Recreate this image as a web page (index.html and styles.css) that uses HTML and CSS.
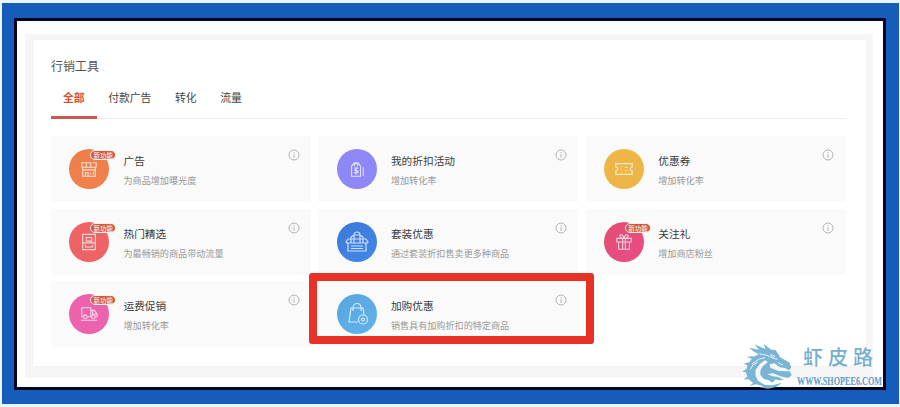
FILE: index.html
```html
<!DOCTYPE html>
<html lang="zh-CN">
<head>
<meta charset="utf-8">
<title>行销工具</title>
<link rel="stylesheet" href="styles.css">
</head>
<body>
<div class="frame">
<div class="screen">
<div class="backdrop">
<main class="panel">
  <h1>行销工具</h1>
  <nav class="tabs"><a class="tab active">全部</a><a class="tab">付款广告</a><a class="tab">转化</a><a class="tab">流量</a></nav>
  <section class="grid">
    <article class="card">
      <div class="icon orange"><svg viewBox="0 0 20 20"><path d="M2 8V3h5v5M7 3h5v5M2 8h16M14 3h4v5M3 8v10h14V8M3 11h14M6 18v-4h3v4M12 14v2M15 13v3"/></svg><span class="badge">新功能</span></div>
      <div class="copy"><h2>广告</h2><p>为商品增加曝光度</p></div><svg class="info" viewBox="0 0 12 12"><circle cx="6" cy="6" r="5"/><path d="M6 5.2v3.6M6 3v1"/></svg>
    </article>
    <article class="card">
      <div class="icon violet"><svg viewBox="0 0 20 20"><path d="M4 18V7l3-4h4l3 4v11zM7 7V4h4v3M9 8v8M11 9H8v3h3v2H7M17 8v10"/></svg></div>
      <div class="copy"><h2>我的折扣活动</h2><p>增加转化率</p></div><svg class="info" viewBox="0 0 12 12"><circle cx="6" cy="6" r="5"/><path d="M6 5.2v3.6M6 3v1"/></svg>
    </article>
    <article class="card">
      <div class="icon yellow"><svg viewBox="0 0 20 20"><path d="M1 4h18v4a2 2 0 0 0 0 4v4H1v-4a2 2 0 0 0 0-4zM7 7v1M7 10v1M7 13v1M11 8h3M11 12h3"/></svg></div>
      <div class="copy"><h2>优惠券</h2><p>增加转化率</p></div><svg class="info" viewBox="0 0 12 12"><circle cx="6" cy="6" r="5"/><path d="M6 5.2v3.6M6 3v1"/></svg>
    </article>
    <article class="card">
      <div class="icon red"><svg viewBox="0 0 20 20"><path d="M3 1.500h14v17H3zM7 5h6v4H7zM3 11h14M6 13v2.500h8V13"/></svg><span class="badge">新功能</span></div>
      <div class="copy"><h2>热门精选</h2><p>为最畅销的商品带动流量</p></div><svg class="info" viewBox="0 0 12 12"><circle cx="6" cy="6" r="5"/><path d="M6 5.2v3.6M6 3v1"/></svg>
    </article>
    <article class="card">
      <div class="icon blue"><svg class="large" viewBox="0 0 24 24"><path d="M6 13V7l3-2h6l3 2v6M9 5c0-4 6-4 6 0M9 5v8M15 5v8M6 9h12M6 9H3l-2 3 2 2M18 9h3l2 3-2 2M3 13h18v8H3zM6 16h12M6 18.500h12"/></svg></div>
      <div class="copy"><h2>套装优惠</h2><p>通过套装折扣售卖更多种商品</p></div><svg class="info" viewBox="0 0 12 12"><circle cx="6" cy="6" r="5"/><path d="M6 5.2v3.6M6 3v1"/></svg>
    </article>
    <article class="card">
      <div class="icon rose"><svg viewBox="0 0 20 20"><path d="M2 6h16v4H2zM4 10v8h12v-8M8.500 6v12M11.500 6v12M10 6C5 6 4 2 7 2c2 0 3 4 3 4s1-4 3-4c3 0 2 4-3 4"/></svg><span class="badge">新功能</span></div>
      <div class="copy"><h2>关注礼</h2><p>增加商店粉丝</p></div><svg class="info" viewBox="0 0 12 12"><circle cx="6" cy="6" r="5"/><path d="M6 5.2v3.6M6 3v1"/></svg>
    </article>
    <article class="card">
      <div class="icon pink"><svg viewBox="0 0 20 20"><path d="M4 13H2V3h10v10H8M12 6h4l3 4v3h-2M14 6v4h5M1 17h18"/><circle cx="6" cy="13" r="2"/><circle cx="15" cy="13" r="2"/></svg><span class="badge">新功能</span></div>
      <div class="copy"><h2>运费促销</h2><p>增加转化率</p></div><svg class="info" viewBox="0 0 12 12"><circle cx="6" cy="6" r="5"/><path d="M6 5.2v3.6M6 3v1"/></svg>
    </article>
    <article class="card">
      <div class="icon sky"><svg class="large" viewBox="0 0 24 24"><path d="M13 20H4L6 6h12l1 7M8 6c0-6 8-6 8 0M8 6v3M16 6v3"/><circle cx="18" cy="17.500" r="4.500"/><circle cx="18" cy="17.500" r="1.500"/></svg></div>
      <div class="copy"><h2>加购优惠</h2><p>销售具有加购折扣的特定商品</p></div><svg class="info" viewBox="0 0 12 12"><circle cx="6" cy="6" r="5"/><path d="M6 5.2v3.6M6 3v1"/></svg>
      <span class="highlight"></span>
    </article>
  </section>
</main>
</div>
</div>
</div>
<div class="watermark">
  <svg class="dragon" viewBox="36 24 150 138">
    <path d="M72 50 57 38 87 44 74 28 106 42 101 27 124 44 137 45 151 67 179 83 184 98 176 106 167 100 148 96 133 85 119 88 121 98 146 108 179 109 185 121 175 129 151 124 130 115 112 117 128 124 145 126 161 134 147 136 137 133 127 143 115 135 101 132 91 119 91 107 98 94 113 81 105 76 89 88 77 104 76 121 84 137 105 150 128 151 157 143 138 156 114 161 89 157 101 154 78 148 58 153 69 144 55 132 41 134 52 124 47 112 37 110 50 101 52 91 41 86 59 81 65 71 49 65 75 64 86 58z"/>
    <path class="cut" d="M88 56 111 61 130 70 143 73M66 87 88 72 105 68M61 103 69 90 83 82M122 59l13 4-5 5zM145 83l14 7"/>
  </svg>
  <div class="brand"><strong>虾皮路</strong><svg class="url" viewBox="0 0 87 14"><text x="0" y="11.500" textLength="85" lengthAdjust="spacingAndGlyphs">WWW.SHOPEE6.COM</text></svg></div>
</div>
</body>
</html>
```
FILE: styles.css
```css
* { box-sizing: border-box; }
body {
  margin: 0;
  height: 407px;
  padding: 3px 1px 3px 2px;
  background: #e9f6fc;
  font-family: "Noto Sans CJK SC", sans-serif;
  position: relative;
  overflow: hidden;
}
h1, h2, p { margin: 0; font-weight: 400; white-space: nowrap; }
.frame { height: 401px; padding: 15px 13px 14px 12px; background: #165cbb; }
.screen { height: 372px; border: 3px solid #020621; background: #fff; padding: 13px 10px 9px 8px; }
.backdrop { height: 344px; background: #f6f6f6; padding: 6px 7px 12px 8px; }
.panel {
  height: 326px;
  padding: 16px 19px 0 18px;
  background: #fff;
  box-shadow: 0 0 2px #e9e9e9;
}
h1 { font-size: 12px; line-height: 20px; color: #555; }
.tabs {
  display: flex;
  gap: 23.600px;
  height: 43px;
  padding-left: 12px;
  border-bottom: 1px solid #eee;
}
.tab { font-size: 10.8px; line-height: 43px; color: #444; position: relative; white-space: nowrap; }
.tab.active { color: #d65238; font-weight: 700; }
.tab.active::after {
  content: "";
  position: absolute;
  left: -12px;
  right: -12px;
  bottom: -1px;
  height: 3px;
  background: #c55b48;
}
.grid {
  display: grid;
  grid-template-columns: repeat(3, 260px);
  grid-auto-rows: 66px;
  gap: 6.5px 7.400px;
  margin-top: 17px;
}
.card {
  display: flex;
  align-items: flex-start;
  padding: 13px 11.500px 0 18.300px;
  background: #fafafa;
  position: relative;
}
.icon {
  width: 40px;
  height: 40px;
  border-radius: 50%;
  display: grid;
  place-items: center;
  position: relative;
  flex: none;
}
.icon svg { width: 18px; height: 18px; fill: none; stroke: #fff; stroke-width: 1.200; opacity: .75; }
.icon svg.large { width: 24px; height: 24px; }
.orange { background: linear-gradient(160deg, #ec8046, #f1804f); }
.violet { background: #8d88f5; }
.yellow { background: #edb647; }
.red { background: #ed6366; }
.blue { background: linear-gradient(145deg, #3b77da, #4389e7); }
.rose { background: linear-gradient(145deg, #e34d73, #e84d86); }
.pink { background: #ed62ad; }
.sky { background: linear-gradient(145deg, #57a5df, #61b2ec); }
.badge {
  position: absolute;
  left: 21px;
  top: 1px;
  width: 26px;
  height: 10px;
  border: 1px solid #fff0e7;
  border-radius: 5px;
  background: #d0593f;
  color: #fff;
  font-size: 6.500px;
  line-height: 8px;
  text-align: center;
  white-space: nowrap;
}
.copy { margin: 3px 0 0 14.200px; flex: 1; min-width: 0; }
h2 { font-size: 10.700px; line-height: 17px; color: #3c3c3c; }
p { font-size: 9.100px; line-height: 14px; margin-top: 4px; color: #999; }
.info { width: 12px; height: 12px; flex: none; fill: none; stroke: #aaa; stroke-width: .9; }
.highlight {
  position: absolute;
  left: -9.500px;
  top: -8px;
  width: 285px;
  height: 71px;
  border: 8px solid #e83228;
  border-radius: 3px;
}
.watermark {
  position: absolute;
  left: 742px;
  top: 343px;
  display: flex;
  gap: 5px;
  color: #76aecf;
}
.dragon { width: 50px; height: 46px; fill: #7bb5d5; flex: none; }
.cut { fill: none; stroke: #e5f3fa; stroke-width: 3; }
.brand { display: flex; flex-direction: column; }
.brand strong { font-size: 20px; line-height: 28px; letter-spacing: 5px; margin-left: 6px; font-weight: 500; white-space: nowrap; }
.url { width: 87px; height: 14px; margin-top: 2px; fill: #689fc5; stroke: #689fc5; stroke-width: .2; font: 700 12.500px "Liberation Serif", serif; }
```
